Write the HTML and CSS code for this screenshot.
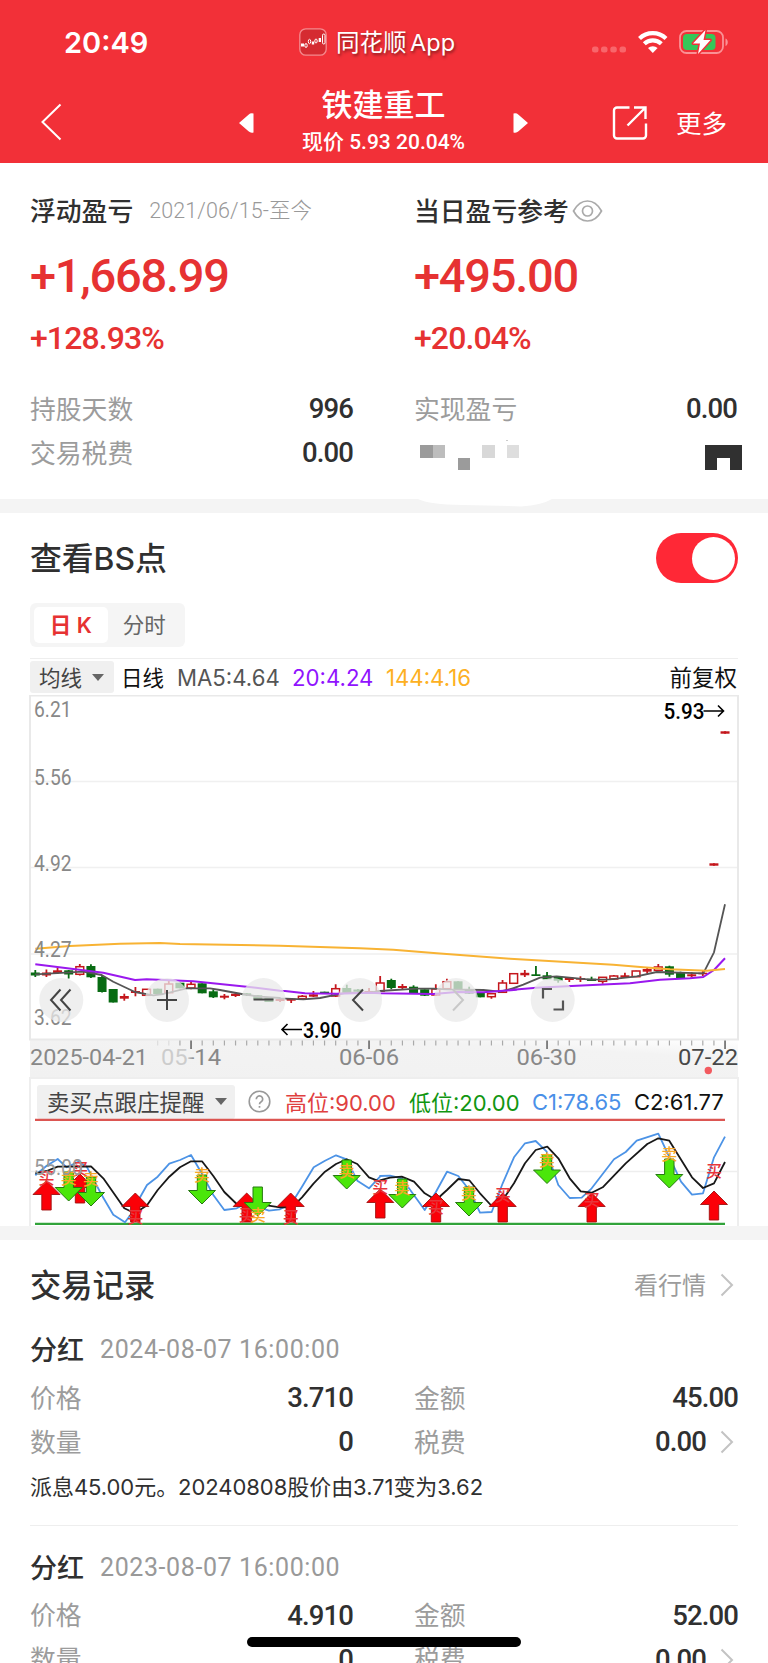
FILE: index.html
```html
<!DOCTYPE html>
<html lang="zh-CN">
<head>
<meta charset="utf-8">
<title>铁建重工</title>
<link rel="stylesheet" href="styles.css">
</head>
<body>
<header class="top">
  <div class="status">
    <span class="clock">20:49</span>
    <div class="source">
      <svg width="28" height="28" viewBox="0 0 28 28"><rect x=".8" y=".8" width="26.4" height="26.4" rx="6" fill="#d52b31" stroke="#f58a8e" stroke-width="1.3"/><g fill="none" stroke="#fff" stroke-width="1"><ellipse cx="7" cy="17.500" rx="1.200" ry="2"/><ellipse cx="10.500" cy="13.500" rx="1.200" ry="2.200"/><ellipse cx="17" cy="13" rx="1.200" ry="2"/><rect x="23.500" y="6" width="2.500" height="10" rx="1.200"/></g><path d="M2 15.500h3v3H2zM12.800 13.500h2.400v3h-2.400zM19.700 10h2.300v4h-2.300z" fill="#fff"/></svg>
      <span>同花顺 App</span>
    </div>
    <svg class="signals" width="140" height="30" viewBox="590 27 140 30">
      <g fill="#f8666b"><rect x="592" y="46.500" width="6.500" height="6" rx="2.500"/><rect x="601" y="46.500" width="6.500" height="6" rx="2.500"/><rect x="610.300" y="46.500" width="6.500" height="6" rx="2.500"/><rect x="619.500" y="46.500" width="6.500" height="6" rx="2.500"/></g>
      <g fill="none" stroke="#fff" stroke-width="4.200"><path d="M639.500 38.500a19 19 0 0 1 26.500 0"/><path d="M644.300 43.800a12.300 12.300 0 0 1 17 0"/></g>
      <path d="M652.800 53l-4.800-4.900a7 7 0 0 1 9.600 0z" fill="#fff"/>
      <rect x="680" y="31" width="43" height="22" rx="6.500" fill="none" stroke="#fa9195" stroke-width="1.800"/>
      <path d="M725.500 38.500c3 1 3 6.500 0 7.500z" fill="#fa9195"/>
      <rect x="683" y="34" width="32.500" height="16" rx="4" fill="#35c759"/>
      <path d="M705.500 30l-12.500 13.500h7L698 54l12.500-14h-7z" fill="#fff" stroke="#f23038" stroke-width="3" stroke-linejoin="round" paint-order="stroke"/>
    </svg>
  </div>
  <nav class="nav">
    <svg class="back" width="24" height="40" viewBox="0 0 24 40"><path d="M21.500 2.500L3.500 20l18 17.500" fill="none" stroke="#fff" stroke-width="2"/></svg>
    <svg class="prev" width="18" height="24" viewBox="0 0 18 24"><path d="M16.500 2.500v19q-3 .800-5-1.200L2 12l9.500-8.300q2-2 5-1.200z" fill="#fff"/></svg>
    <div class="heading"><h1>铁建重工</h1><p>现价 5.93 20.04%</p></div>
    <svg class="next" width="18" height="24" viewBox="0 0 18 24"><path d="M1.500 2.500v19q3 .800 5-1.200L16 12 6.500 3.700q-2-2-5-1.200z" fill="#fff"/></svg>
    <svg class="share" width="36" height="36" viewBox="0 0 36 36"><path d="M17.500 2.500H5a3 3 0 0 0-3 3v25a3 3 0 0 0 3 3h26a3 3 0 0 0 3-3V18.500M22 2.500h11.500V14M33 3L15.500 20.500" fill="none" stroke="#fff" stroke-width="2.400"/></svg>
    <span class="more">更多</span>
  </nav>
</header>

<section class="profit">
  <div class="col">
    <div class="label"><b>浮动盈亏</b><span class="period">2021/06/15-至今</span></div>
    <div class="amount">+1,668.99</div>
    <div class="pct">+128.93%</div>
    <div class="row"><span>持股天数</span><em>996</em></div>
    <div class="row"><span>交易税费</span><em>0.00</em></div>
  </div>
  <div class="col">
    <div class="label"><b>当日盈亏参考</b><svg class="eye" width="31" height="24" viewBox="0 0 31 24"><g fill="none" stroke="#aaa" stroke-width="1.700"><path d="M1.500 12Q7 2 15.500 2T29.500 12Q24 22 15.500 22T1.500 12z"/><circle cx="15.500" cy="12" r="5"/></g></svg></div>
    <div class="amount">+495.00</div>
    <div class="pct">+20.04%</div>
    <div class="row"><span>实现盈亏</span><em>0.00</em></div>
    <div class="row">
      <svg class="mosaic" width="328" height="34" viewBox="414 436 328 34" shape-rendering="crispEdges"><path fill="#9b9b9b" d="M420.300 445.300h12.400v12.400h-12.400zM457.500 457.700h12.400v12.400h-12.400z"/><path fill="#bdbdbd" d="M432.700 445.300h12.400v12.400h-12.400z"/><path fill="#d8d8d8" d="M482.200 445.300h12.400v12.400h-12.400z"/><path fill="#dedede" d="M507 445.300h12.400v12.400H507z"/><path fill="#ccc" d="M506 439.500h2v1h-2z"/><path fill="#303030" d="M705 445.300h37v24.700h-12.300v-12.300h-12.400v12.300H705z"/></svg>
    </div>
  </div>
</section>
<div class="gap"><svg width="140" height="8" viewBox="0 0 140 8"><path d="M3 0q11 5.500 45 6 32 .500 58 1.500Q127 6 137 0z" fill="#fff"/></svg></div>

<section class="bs">
  <div class="bs-title"><h2>查看BS点</h2><span class="toggle"></span></div>
  <div class="tabs"><span class="tab on">日 K</span><span class="tab">分时</span></div>
  <div class="ma">
    <span class="pick ma-pick"><u>均线</u><i></i></span>
    <u class="daily">日线</u><span class="ma5">MA5:4.64</span><span class="ma20">20:4.24</span><span class="ma144">144:4.16</span><u class="adj">前复权</u>
  </div>
  <svg id="kline" class="plot" width="768" height="382" viewBox="0 695 768 382"></svg>
  <div class="ind">
    <span class="pick ind-pick"><u>卖买点跟庄提醒</u><i></i></span>
    <svg class="help" width="23" height="23" viewBox="0 0 23 23"><circle cx="11.500" cy="11.500" r="10.300" fill="none" stroke="#999" stroke-width="1.600"/><path d="M8.300 9.200a3.200 3.200 0 1 1 4.900 2.600q-1.700 1-1.700 2.500M11.500 16v1.800" fill="none" stroke="#999" stroke-width="1.700"/></svg>
    <span class="hi">高位:90.00</span><span class="lo">低位:20.00</span><span class="c1">C1:78.65</span><span class="c2">C2:61.77</span>
  </div>
  <svg id="signal" class="plot" width="768" height="108" viewBox="0 1118 768 108"></svg>
</section>
<div class="gap"></div>

<section class="records">
  <div class="rec-title"><h2>交易记录</h2><span class="quote">看行情</span><svg class="chev" width="14" height="24" viewBox="0 0 14 24"><path d="M1.500 1.500L12 12 1.500 22.500" fill="none" stroke="#c3c3c3" stroke-width="2"/></svg></div>
  <article class="rec">
    <div class="rec-head"><b>分红</b><time>2024-08-07 16:00:00</time></div>
    <div class="pair"><div class="row"><span>价格</span><em>3.710</em></div><div class="row"><span>金额</span><em>45.00</em></div></div>
    <div class="pair"><div class="row"><span>数量</span><em>0</em></div><div class="row"><span>税费</span><em>0.00</em><svg class="chev" width="14" height="24" viewBox="0 0 14 24"><path d="M1.500 1.500L12 12 1.500 22.500" fill="none" stroke="#c3c3c3" stroke-width="2"/></svg></div></div>
    <p class="note">派息45.00元。20240808股价由3.71变为3.62</p>
  </article>
  <article class="rec">
    <div class="rec-head"><b>分红</b><time>2023-08-07 16:00:00</time></div>
    <div class="pair"><div class="row"><span>价格</span><em>4.910</em></div><div class="row"><span>金额</span><em>52.00</em></div></div>
    <div class="pair"><div class="row"><span>数量</span><em>0</em></div><div class="row"><span>税费</span><em>0.00</em><svg class="chev" width="14" height="24" viewBox="0 0 14 24"><path d="M1.500 1.500L12 12 1.500 22.500" fill="none" stroke="#c3c3c3" stroke-width="2"/></svg></div></div>
  </article>
</section>
<div class="home"></div>
<script src="chart.js"></script>
</body>
</html>
```

FILE: styles.css
```css
* { box-sizing: border-box; margin: 0; padding: 0; }
html, body { height: 1663px; overflow: hidden; }
body { position: relative; width: 768px; background: #fff; color: #303030; font-family: Inter, "Noto Sans CJK SC", sans-serif; }
svg { display: block; flex: none; }
span, b, em, u, time, h1, h2, p, .amount, .pct { white-space: nowrap; }
em, b, i { font-style: normal; }
u { text-decoration: none; padding-bottom: 2px; }
h1, h2, b { font-weight: 500; }

.top { height: 163px; background: #f23038; color: #fff; }
.status { display: flex; align-items: center; height: 84px; padding-left: 64px; }
.clock { width: 235px; font-size: 29px; font-weight: 600; letter-spacing: 0; }
.source { display: flex; align-items: center; gap: 9px; width: 291px; font-size: 23.500px; text-shadow: 1px 2px 3px rgba(0,0,0,.45); }
.source span { padding-bottom: 3px; letter-spacing: 0; word-spacing: -3px; }
.nav { display: flex; align-items: center; height: 79px; padding-left: 39px; }
.back { margin-top: -3px; }
.prev { margin-left: 174px; margin-top: -2px; }
.heading { width: 257px; text-align: center; }
.heading h1 { font-size: 31px; line-height: 38px; margin-top: -1px; }
.heading p { font: 500 21px/36px Roboto, "Noto Sans CJK SC", sans-serif; letter-spacing: 0; }
.next { margin-top: -2px; }
.share { margin-left: 82px; margin-top: -2px; }
.more { margin-left: 28px; padding-bottom: 4px; font-size: 25.500px; }

.profit { display: flex; gap: 61px; height: 336px; padding: 26px 0 0 30px; }
.col { width: 323px; }
.label { display: flex; align-items: center; height: 44px; }
.label b { padding-bottom: 4px; font-size: 25.800px; }
.period { margin-left: 16px; color: #999; font: 300 21.500px/30px Roboto, "Noto Sans CJK SC", sans-serif; letter-spacing: .1px; }
.eye { margin-left: 3px; margin-top: -1px; }
.amount { height: 84px; line-height: 86px; color: #e63232; font-family: Roboto, sans-serif; font-weight: 500; font-size: 47px; letter-spacing: -1.250px; }
.pct { height: 42px; line-height: 42px; margin-bottom: 28px; color: #e63232; font-family: Roboto, sans-serif; font-weight: 500; font-size: 32px; letter-spacing: -.9px; }
.row { display: flex; justify-content: space-between; align-items: center; height: 44px; font-size: 25.800px; }
.row span { padding-bottom: 4px; color: #9c9c9c; font-weight: 400; }
.row em { font: 500 27.500px/44px Roboto, sans-serif; letter-spacing: -.9px; }
.gap { height: 14px; background: #f4f4f4; padding-left: 415px; }

.bs-title { display: flex; justify-content: space-between; align-items: center; height: 90px; padding: 0 30px; }
h2 { padding-bottom: 4px; font-size: 31.300px; }
.bs-title h2 { font-size: 31.800px; }
.toggle { width: 82px; height: 50px; border-radius: 25px; background: #ff2836; padding: 4px 3px 0 36px; }
.toggle::before { content: ""; display: block; width: 43px; height: 43px; border-radius: 50%; background: #fff; }
.tabs { display: flex; width: 155px; height: 44px; margin: 0 0 11px 30px; padding: 4px; border-radius: 6px; background: #f5f5f5; }
.tab { width: 74px; line-height: 36px; text-align: center; font-size: 21.500px; color: #666; }
.on { background: #fff; border-radius: 5px; color: #e63232; font-weight: 600; }
.ma { display: flex; align-items: center; height: 37px; margin: 0 30px; border-top: 1.500px solid #eee; font-size: 22.200px; color: #111; }
.pick { display: flex; align-items: center; justify-content: space-between; background: #f0f0f0; border-radius: 3px; color: #444; }
.pick i { border: 6px solid transparent; border-top: 7px solid #666; border-bottom: 0; }
.ma-pick { width: 84px; height: 32px; padding: 0 10px 0 9px; font-size: 21.500px; }
.daily { width: 56px; margin-left: 7px; font-size: 21.500px; }
.ma5 { width: 115px; color: #555; }
.ma20 { width: 94px; color: #9013fe; }
.ma144 { color: #fdb022; }
.adj { margin: 0 1px 0 auto; font-size: 22.500px; }
.ind { display: flex; align-items: center; height: 41px; margin: 0 29px; padding: 6px 6px 0; border: 2px solid #eee; border-bottom: 0; font-size: 22px; }
.ind-pick { width: 198px; height: 34px; padding: 0 8px 0 10px; font-size: 22.500px; }
.help { margin: 0 14px 0 13px; }
.hi { width: 124px; color: #e04040; }
.hi, .lo { padding-bottom: 1px; }
.lo { width: 123px; color: #119611; }
.c1 { width: 102px; color: #4a90e8; }
.c2 { color: #111; }
.plot text { font-family: Roboto, sans-serif; }
.plot .mark { font: 500 16px "Noto Sans CJK SC", sans-serif; }

.records { height: 423px; overflow: hidden; padding: 0 30px; }
.rec-title { display: flex; align-items: center; height: 87px; padding-top: 3px; }
.quote { margin-left: auto; padding-bottom: 3px; font-size: 24px; color: #9c9c9c; }
.chev { margin: 0 4px 0 14px; }
.rec { height: 198px; }
.rec-head { display: flex; align-items: center; height: 45px; margin-bottom: 4px; }
.rec-head b { padding-bottom: 2px; font-size: 27px; }
.rec-head time { margin-left: 16px; color: #999; font-family: Roboto, sans-serif; font-weight: 400; font-size: 25px; letter-spacing: .6px; }
.pair { display: flex; gap: 61px; }
.pair .row { width: 323px; }
.pair .row em { margin-left: auto; }
.pair .row:last-child { width: 324px; }
.note { height: 50px; line-height: 47px; font-size: 22px; letter-spacing: -.05px; }
.rec + .rec { border-top: 1.500px solid #eee; padding-top: 18.500px; }
.home { position: absolute; left: 247px; top: 1637px; width: 274px; height: 10px; border-radius: 5px; background: #000; }
```

FILE: chart.js
```js
const X = i => 35.3 + 11.125 * i;
// index-ordered candles: colour (g/r/h = hollow red), body top, body bottom, wick top, wick bottom
const candles = [
  ['g',972.5,975.5,970,977],['r',972.5,975.5,969.5,977],['r',970.3,973,968,974],['g',970.3,974.5,970,978.500],
  ['h',966.7,974.3,964,975.5],['g',966,977.3,964.3,978],['g',977,992,976,992.500],['g',989,1002.500,989,1002.500],
  ['r',996,998.700,993.700,1000.700],['r',991,993,987,996.300],['h',989.3,995.3,989.3,995.3],['g',988.7,994,988.7,994],
  ['h',984,992.700,980.700,992.700],['g',982.7,988.3,982.7,988.3],['h',984.3,988,981.7,989.3],['g',983.3,993.3,983.3,993.3],
  ['g',991.3,997.3,989.3,998],['r',995.7,997.700,994,999.3],['r',993.7,996,993,997],['g',993.3,995.300,993,996],
  ['g',995.3,999.3,995.3,999.3],['g',997.7,1002,997.7,1002],['r',999,1001,998,1002],['r',998.7,1000.700,998.7,1003],
  ['h',996.3,998.700,995,999],['r',994.3,996.700,991,997],['g',991.7,993.700,991.7,994],['h',988.7,996,984.3,997],
  ['g',988,992.700,984.700,992.700],['g',989.5,991.700,989,992],['r',991,993.300,988,994],['h',983,991.300,976,992],
  ['g',980,988,978.7,989.3],['r',986,988,984,989],['g',986.7,993.3,985.3,993.3],['g',989.3,995.7,989.3,996],
  ['h',989,995,984.3,996],['h',981.7,988.7,978.7,989],['g',981.3,989.3,981.3,989.3],['g',989,993.700,986.7,994],
  ['g',992.7,997.3,992.7,997.3],['h',993.7,996.7,993,998.7],['h',983,992.3,980,993],['h',973.7,983.300,973.7,983.3],
  ['r',972.8,975.300,970,977],['g',974.3,976,966,976],['g',975.3,979.3,972,979.3],['g',976.7,980.7,976.7,982.7],
  ['r',977.7,980,977,982],['r',978,979.7,976.3,982],['g',978.7,981,976.7,981],['h',977.3,981.300,977,983.7],
  ['h',976,979,975,980],['r',975.3,977.700,972.7,978],['h',971,976.700,970.7,977],['r',969,971.700,967.3,973.7],
  ['h',967,970.300,964,971],['g',966.3,974.7,965.7,976.7],['g',972,978,971.7,978],['r',974.3,976.300,972.3,977],
  ['r',972.7,974.300,970.3,976],['r',863.3,865.700,863.3,865.7],['r',731.300,733.700,731.3,733.7]
];
// point lists are drawn in three-times-enlarged panels; each panel has its own origin
const join = parts => parts.map(([ox, oy, s]) => s.split(' ').map(p => {
  const [x, y] = p.split(',');
  return (ox + x / 3).toFixed(1) + ',' + (oy + y / 3).toFixed(1);
}).join(' ')).join(' ');
const line = (pts, c, w) => `<polyline points="${pts}" fill="none" stroke="${c}" stroke-width="${w}" stroke-linejoin="round"/>`;
const label = (x, y, w, t, c = '#888', wt = 400, s = 21.5) =>
  `<text x="${x}" y="${y}" textLength="${w}" lengthAdjust="spacingAndGlyphs" font-size="${s}" font-weight="${wt}" fill="${c}">${t}</text>`;
const path = (d, c, w) => `<path d="${d}" fill="none" stroke="${c}" stroke-width="${w}"/>`;

let k = `<defs>
<linearGradient id="band" x1="0" y1="1" x2="1" y2="0"><stop offset="0" stop-color="#f1f1f1"/><stop offset=".75" stop-color="#f3f3f3"/><stop offset="1" stop-color="#fff"/></linearGradient>
<linearGradient id="fade"><stop offset="0" stop-color="#ccc"/><stop offset=".45" stop-color="#ccc"/><stop offset=".55" stop-color="#888"/></linearGradient></defs>
<rect x="30" y="1040" width="708" height="37" fill="url(#band)"/>`;
k += path('M30 781.500H738M30 867.500H738M30 954H738', '#f0f0f0', 1.5);
k += path('M30 1039.500V695.500H738V1039.500Z', '#e9e9e9', 2);
for (let i = 11; i <= 62; i++) {
  const major = i === 14 || i === 30 || i === 46 || i === 62;
  k += path(`M${X(i)} 1040.500V${major ? 1049 : 1045.5}`, major ? '#777' : i < 13 ? '#ddd' : '#aaa', major ? 1.8 : 1.2);
}
candles.forEach(([t, a, b, u, d], i) => {
  const c = t === 'g' ? '#076b12' : '#c4161c', x = X(i);
  if (t === 'h') {
    k += path(`M${x} ${u}V${a}M${x} ${b}V${d}`, c, 1.8);
    k += `<rect x="${x - 3.9}" y="${a}" width="7.800" height="${b - a}" fill="#fff" stroke="${c}" stroke-width="1.500"/>`;
  } else {
    k += path(`M${x} ${u}V${d}`, c, 1.8) + `<rect x="${x - 4.5}" y="${a}" width="9" height="${b - a}" fill="${c}"/>`;
  }
});
k += line(join([[20,920,'46,163 190,155 245,165 280,185 345,216 400,226 430,222 500,205 570,205 600,210 665,222 720,230 780,234'],[270,920,'30,235 100,238 150,234 230,218 300,218 330,213 440,206 490,206 530,208 640,210 690,215 740,202'],[510,890,'0,298 40,284 90,263 140,259 240,269 300,268 380,259 440,246 580,250 612,187 645,43']]), '#555', 1.8);
k += line(join([[20,920,'46,133 250,158 345,180 380,178 520,184 680,200 780,212'],[270,920,'45,213 105,220 200,221 300,218 330,220 490,222 560,216 640,217 690,213 740,209'],[510,890,'0,300 80,293 200,287 360,280 450,269 540,265 580,261 612,240 645,205']]), '#9a18ee', 2);
k += line(join([[20,920,'46,86 150,78 300,71 420,69 480,72 780,77'],[270,920,'270,85 370,89 500,100'],[510,890,'0,206 310,224 400,232 480,238 590,242 645,237']]), '#f8b334', 2);
k += label(34, 717, 37.5, '6.21') + label(34, 785, 37.5, '5.56') + label(34, 871, 37.5, '4.92') + label(34, 957, 37.5, '4.27') + label(34, 1025, 37.5, '3.62');
k += label(663.5, 719, 41, '5.93', '#000', 500, 22) + path('M703.500 711H723M718 705.500L723.500 711L718 716.500', '#000', 1.6);
k += label(303, 1037.5, 38.5, '3.90', '#000', 500, 21.5) + path('M302 1029.500H282M287.500 1024L282 1029.500L287.500 1035', '#000', 1.6);
[61.3, 167, 263.5, 360, 456, 552.7].forEach(x => { k += `<circle cx="${x}" cy="1000" r="22" fill="#e9e9e9" fill-opacity=".75"/>`; });
k += path('M60.500 989.500L51 1000L60.500 1010.500M70.500 989.500L61 1000L70.500 1010.500M157 1000H177M167 990V1010M253.500 999.500H273.500M363 989.500L353 1000L363 1010.500', '#444', 2);
k += path('M453 989.500L463 1000L453 1010.500', '#c8c8c8', 2);
k += path('M543 998.500V989H552M553.500 1009.500H563V1000.500', '#555', 2.2);
k += label(30, 1065, 118, '2025-04-21') + label(161, 1065, 60, '05-14', 'url(#fade)') + label(339, 1065, 60, '06-06') + label(516.5, 1065, 60, '06-30') + label(678, 1065, 60, '07-22', '#484848');
k += '<circle cx="708.300" cy="1070.500" r="3.700" fill="#f25a5f"/>';
document.getElementById('kline').innerHTML = k;

const up = (x, y) => `<path d="M${x} ${y}l13.500 13.500h-8.800v15.500h-9.400v-15.500h-8.800z" fill="#fb0007" stroke="#a01010" stroke-width=".9"/>`;
const down = (x, y) => `<path d="M${x} ${y}l13.500-13.500h-8.800v-15.500h-9.400v15.500h-8.800z" fill="#4be60a" stroke="#257a10" stroke-width="1"/>`;
const mark = (x, y, t) => `<text class="mark" x="${x}" y="${y + 5.8}" text-anchor="middle" fill="${t === '买' ? '#e8353a' : '#f9a825'}">${t}</text>`;
let s = path('M30 1118V1226M738 1118V1226', '#eee', 2) + path('M30 1171.500H738', '#eee', 1.3);
s += path('M35 1119.800H725', '#dc5652', 2.2) + path('M35 1223.800H725', '#31a33a', 2.2);
s += line(join([[20,1070,'46,316 80,287 113,267 140,292 175,275 200,290 245,375 280,434 315,457 335,430 350,400 381,345 413,320 448,281 480,270 513,255 545,310 580,375 613,420 650,415 680,400 747,422 780,418 815,400 846,350 881,292 915,272 948,256 980,268 1012,332 1047,355 1080,320'],[380,1070,'0,318 30,317 65,325 134,420 168,365 201,305 235,318 268,360 300,428 335,426 368,340 402,262 435,220 467,213 500,245 535,345 569,384 605,383 635,355 702,268 737,246 770,212 835,191 870,265 903,335 936,374 969,370 1002,262 1035,200']]), '#4c93e6', 1.8);
s += line(join([[20,1070,'46,310 80,303 113,290 213,289 250,325 313,415 345,430 381,406 413,360 448,320 480,292 513,274 546,274 580,318 613,366 650,402 700,400 780,412 815,412 846,382 881,340 915,305 948,282 980,268 1012,282 1047,322 1080,335'],[380,1070,'0,331 30,323 65,320 102,335 134,370 168,390 201,360 235,327 268,331 300,370 335,408 368,390 402,340 435,280 467,240 502,230 535,265 569,325 602,364 635,368 668,352 737,280 802,222 835,205 868,212 936,322 969,354 1002,340 1035,276']]), '#181818', 1.8);
[[46.5,1181,1178],[80,1174,1169],[135.3,1193,1217],[246.7,1193,1215],[290.7,1193,1217],[380.3,1189,1187],[436,1193,1207],[502.7,1193,1195],[591.7,1193,1200],[714,1191,1171]]
  .forEach(([x, y, m]) => { s += up(x, y) + mark(x, m, '买'); });
[[68.7,1201,1178],[91,1206,1179],[202,1204,1175],[257.7,1216,1215],[346.700,1189,1171],[402.3,1208,1188],[469,1216,1193],[547,1183.5,1160],[669.3,1188,1154]]
  .forEach(([x, y, m]) => { s += down(x, y) + mark(x, m, '卖'); });
s += label(34, 1174.5, 49, '55.00', '#999');
document.getElementById('signal').innerHTML = s;
```
